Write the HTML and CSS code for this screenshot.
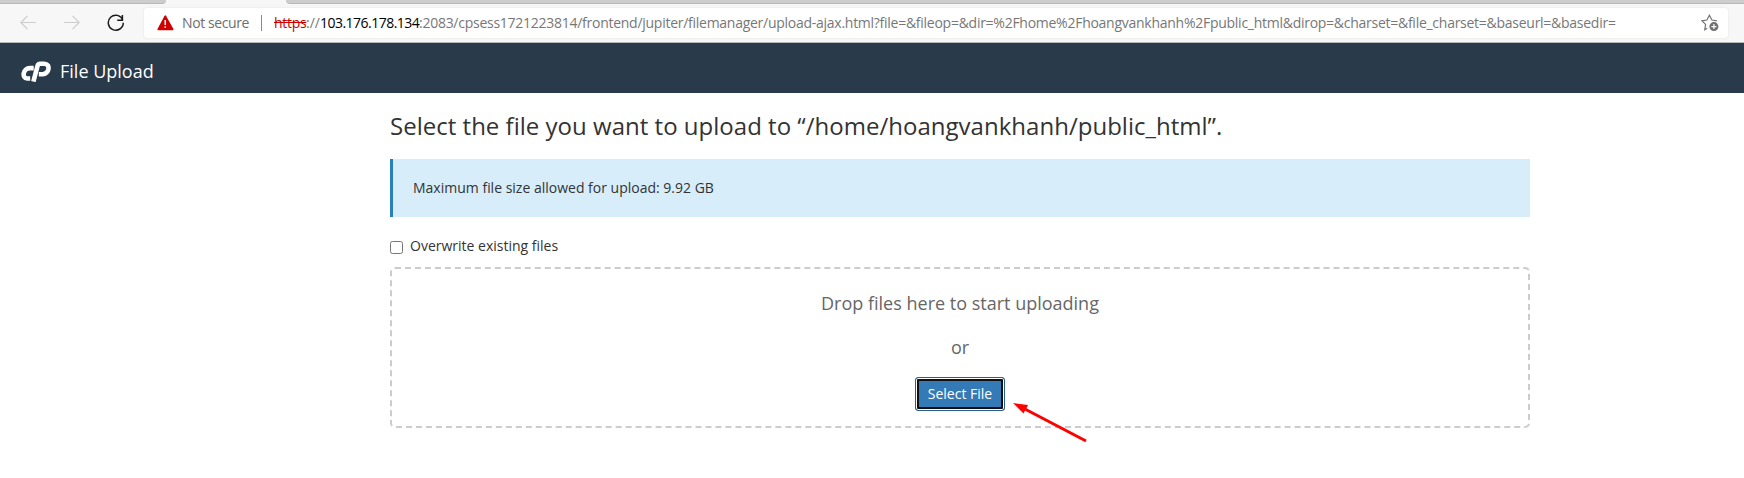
FILE: index.html
```html
<!DOCTYPE html>
<html lang="en">
<head>
<meta charset="utf-8">
<title>File Upload</title>
<link rel="stylesheet" href="styles.css">
</head>
<body>
<div class="tabs"><div class="tab tab-left"></div><div class="tab tab-right"></div></div>
<div class="toolbar">
  <svg class="nav back" width="16" height="16" viewBox="0 0 16 16"><path d="M16 7.5H.8M7.5.8.8 7.5l6.7 6.7"/></svg>
  <svg class="nav forward" width="16" height="16" viewBox="0 0 16 16"><path d="M0 7.5h15.2M8.5.8l6.7 6.7-6.7 6.7"/></svg>
  <svg class="reload" width="18" height="18" viewBox="0 0 18 18"><path d="M15.8 6A7.5 7.5 0 1 0 16.3 8.8M15.4 1v5.2h-5.2"/></svg>
  <div class="address">
    <svg class="warning" width="17" height="16" viewBox="0 0 17 16"><path d="M7.3 1.2Q8.3-.5 9.3 1.2L16.3 13.8Q17 15.3 15.4 15.3H1.4Q0 15.3.6 13.8Z" fill="#d00000"/><path d="M7.5 5h1.5v5H7.5zM7.5 11.2h1.5v1.6H7.5z" fill="#fff"/></svg>
    <span class="security">Not secure</span>
    <span class="divider"></span>
    <span class="url"><span class="scheme">https</span><span class="slashes">://</span><span class="host">103.176.178.134</span><span class="path">:2083/cpsess1721223814/frontend/jupiter/filemanager/upload-ajax.html?file=&amp;fileop=&amp;dir=%2Fhome%2Fhoangvankhanh%2Fpublic_html&amp;dirop=&amp;charset=&amp;file_charset=&amp;baseurl=&amp;basedir=</span></span>
    <svg class="favorite" width="18" height="18" viewBox="0 0 18 18"><path d="M6.2 14.2 3.7 15.8l.9-5.4L.9 6.8l5-.8L8.4 1.2 10.9 6l5 .8" fill="none" stroke="#767676" stroke-width="1.2"/><circle cx="12.9" cy="12.6" r="4.5" fill="#707070"/><path d="M10.4 12.6h5M12.9 10.1v5" stroke="#fff" stroke-width="1.2"/></svg>
  </div>
</div>
<header class="header">
  <svg class="logo" width="31" height="21" viewBox="0 0 31 21"><g fill="none" stroke="#fff" stroke-width="4.6"><path d="M12.7 7.1H9C1.8 7.1.6 17.5 6.2 17.5H9.2"/><path d="M12.4 20.6 16.6 4.7Q17.1 2.8 19.1 2.8H23.2C30.1 2.8 28.1 13.2 21.6 13.2H17.8"/></g></svg>
  <span class="title">File Upload</span>
</header>
<main class="content">
  <h1 class="heading">Select the file you want to upload to “/home/hoangvankhanh/public_html”.</h1>
  <div class="callout">Maximum file size allowed for upload: 9.92 GB</div>
  <label class="overwrite"><input class="checkbox" type="checkbox">Overwrite existing files</label>
  <section class="dropzone">
    <p class="prompt">Drop files here to start uploading</p>
    <p class="prompt">or</p>
    <button class="select" type="button">Select File</button>
    <svg class="arrow" width="76" height="42" viewBox="0 0 76 42"><path d="m10 5 63 33" stroke="#f00" stroke-width="3"/><path d="m0 0 15 2-4.5 8.5z" fill="#f00"/></svg>
  </section>
</main>
</body>
</html>
```
FILE: styles.css
```css
* { box-sizing: border-box; }
body { min-height: 100vh; margin: 0; background: #fff; color: #333; font: 14px/20px "Open Sans", sans-serif; }
.tabs { display: flex; justify-content: space-between; height: 4px; background: #f7f7f7; }
.tab { background: #cdcdcd; border-bottom: 1px solid #b9b9b9; }
.tab-left { width: 166px; border-bottom-right-radius: 4px; }
.tab-right { width: 1458px; border-bottom-left-radius: 4px; }
.toolbar { display: flex; align-items: center; height: 39px; padding: 0 16px 1px 20px; background: #f7f7f7; border-bottom: 1px solid #b5b8b7; }
.nav { fill: none; stroke: #cdcdcd; stroke-width: 1.2; }
.forward { margin-left: 28px; }
.reload { margin: 0 19px 0 27px; fill: none; stroke: #1b1b1b; stroke-width: 1.5; }
.address { display: flex; align-items: center; flex: 1; height: 30px; padding: 0 9px 0 14px; background: #fff; border-radius: 4px; box-shadow: 0 0 3px #e4e4e4; white-space: nowrap; }
.warning { margin-left: -1px; }
.security { width: 67px; margin-left: 8px; padding-top: 1px; color: #6e6e6e; letter-spacing: -.4px; }
.divider { width: 1px; height: 16px; margin: 0 12px 0 12px; background: #8a8a8a; }
.url { display: flex; padding-top: 1px; color: #777; }
.scheme { width: 32px; color: #c80000; letter-spacing: -.3px; text-decoration: line-through; }
.slashes { width: 14px; }
.host { width: 99px; color: #000; letter-spacing: -.52px; }
.path { letter-spacing: -.265px; }
.favorite { margin-left: auto; }
.header { display: flex; align-items: center; height: 50px; padding: 6px 20px 0 21px; background: #293a4a; color: #fff; }
.title { margin-left: 8px; font-size: 18px; }
.content { width: 1140px; margin-left: 390px; }
.heading { margin: 0; padding: 16px 0 17px; font-size: 24px; font-weight: 400; line-height: 33px; letter-spacing: .015px; }
.callout { height: 58px; padding: 19px 20px; border-left: 3px solid #2980b9; background: #d7edfa; }
.overwrite { display: flex; align-items: flex-start; margin-top: 19px; }
.checkbox { width: 13px; height: 13px; margin: 5px 7px 0 0; }
.dropzone { position: relative; display: flex; flex-direction: column; align-items: center; height: 161px; margin-top: 11px; padding-top: 22px; border: 2px dashed #ccc; border-radius: 5px; color: #666; }
.prompt { margin: 0 0 19px; font-size: 18px; line-height: 25px; }
.select { width: 90px; height: 34px; margin-top: -2px; padding: 0 0 1px; border: 1px solid #285e8e; border-radius: 3px; background: #337ab7; color: #fff; font: inherit; box-shadow: inset 0 0 0 1px #fff, inset 0 0 0 3px #101010; }
.arrow { position: absolute; left: 621px; top: 134px; }
```
